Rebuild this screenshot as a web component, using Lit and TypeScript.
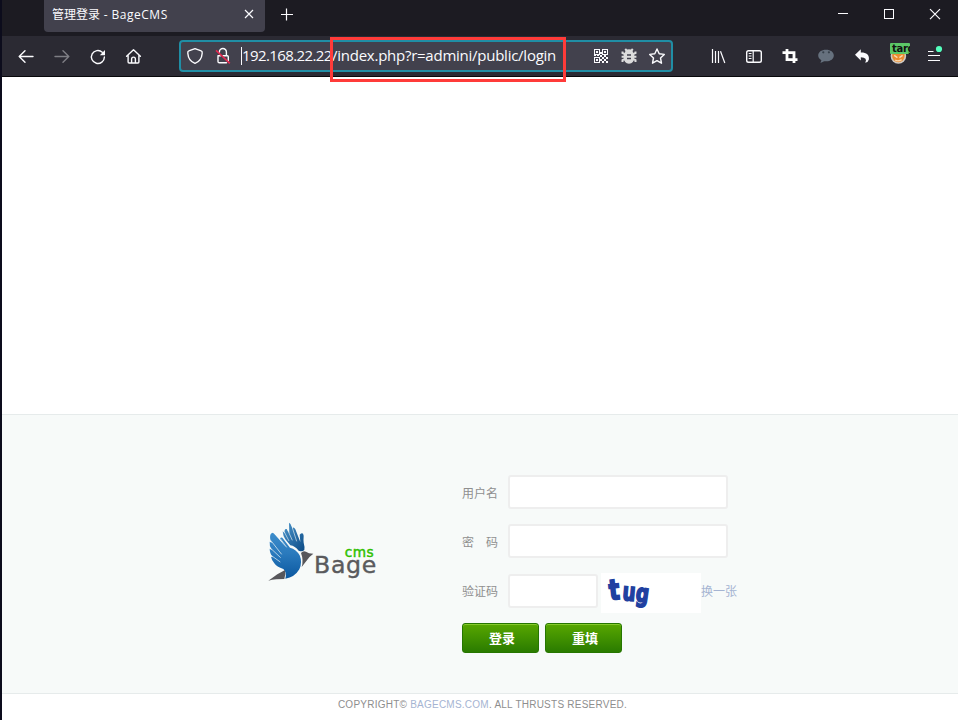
import { LitElement, html, css, svg } from "lit";
import { customElement, property } from "lit/decorators.js";

// Toolbar glyphs, each on a 24x24 grid.
const icons: Record<string, unknown> = {
  back: svg`<path class="s" d="M5.2 12.5H19M11 6.8L5.2 12.5L11 18.2"/>`,
  forward: svg`<path class="s" d="M5 12.5H18.8M13 6.8L18.8 12.5L13 18.2"/>`,
  reload: svg`<path class="s" d="M16.3 8.2A6.5 6.5 0 1 0 18.4 13"/><path class="f" d="M19 6V11.2H13.8Z"/>`,
  home: svg`<path class="s" d="M4.6 12.2L11.5 5.8L18.4 12.2M6.1 11.3V18a1 1 0 0 0 1 1H15.9a1 1 0 0 0 1-1V11.3M9.6 19V15a1.9 1.9 0 0 1 3.8 0V19"/>`,
  shield: svg`<path class="s" d="M12 4.6L18.2 6.9Q19.4 7.3 19.2 9.2C18.8 14.6 16.2 17.8 12 19.4C7.8 17.8 5.2 14.6 4.8 9.2Q4.6 7.3 5.8 6.9Z"/>`,
  lock: svg`<path class="s" d="M8.4 8.2V8a3.5 3.5 0 0 1 7 0V11.5M9.5 11.8H7V17.5a1.3 1.3 0 0 0 1.3 1.3H15.5M12 11.8H16.3a1 1 0 0 1 1 1V16.5"/><path d="M5 6.3L18.8 19.4" stroke="#e22850" stroke-width="1.6"/>`,
  qr: svg`<g class="f" shape-rendering="crispEdges"><path fill-rule="evenodd" d="M5 5h6v6H5zM6 6v4h4V6zM13 5h6v6h-6zM14 6v4h4V6zM5 13h6v6H5zM6 14v4h4v-4z"/><path d="M7 7h2v2H7zM15 7h2v2h-2zM7 15h2v2H7zM11 8h2v2h-2zM11 11h2v2h-2zM5 11h2v1H5zM8 11h2v1H8zM13 13h2v2h-2zM17 13h2v2h-2zM15 11h2v2h-2zM15 15h2v2h-2zM13 17h2v2h-2zM17 17h2v2h-2zM11 15h2v2h-2z"/></g>`,
  bug: svg`<path d="M8.2 5L10 7M15.8 5L14 7M8 10.2L5.5 9V7.6M16 10.2L18.5 9V7.6M8 12.8H4.6M16 12.8H19.4M8 15L5.5 16.2V18M16 15L18.5 16.2V18" fill="none" stroke="#dcdcdc" stroke-width="2"/><path fill="#dcdcdc" d="M8 8.5Q8.5 5.3 12 5.3T16 8.5Q17.4 9 17.4 12.7Q17 19.7 12 19.7T6.6 12.7Q6.6 9 8 8.5Z"/><path d="M10 11h4M10 14.5h4" stroke="#42414d" stroke-width="1.4"/>`,
  star: svg`<path class="s" stroke-linejoin="round" d="M12 5L14.2 9.8L19.3 10.4L15.5 14L16.5 19.2L12 16.6L7.5 19.2L8.5 14L4.7 10.4L9.8 9.8Z"/>`,
  library: svg`<path class="s thin" d="M6.5 5V19M9.5 7V19M12.5 7V19M14.5 7.2L18.8 19"/>`,
  sidebar: svg`<rect class="s" x="4.7" y="6.7" width="14.6" height="11.6" rx="1.8"/><path class="s thin" d="M11.2 7V18M6.7 9.5H9.5M6.7 12H9.5M6.7 14.5H9.5"/>`,
  crop: svg`<path d="M4.5 8.6H16V19M9 5V15.6H19.5" fill="none" stroke="#fff" stroke-width="2.8"/>`,
  chat: svg`<path fill="#66717e" d="M12 5.8C7.4 5.8 4.2 8.2 4.2 11.5C4.2 13.6 5.6 15.2 7.4 16.2L6.4 19L10.2 17.2C16 17.9 19.8 15.3 19.8 11.5C19.8 8.2 16.6 5.8 12 5.8Z"/><circle cx="9.3" cy="8.3" r="1.1" fill="#37414b"/><circle cx="14.9" cy="8.3" r="1.1" fill="#37414b"/>`,
  undo: svg`<path class="f" d="M10.8 5.2V8.6C16.5 8.5 19.5 11 18.9 15.4Q18.3 18 15.2 18.8Q18 13.4 10.8 13.3V16.6L5 10.8Z"/>`,
  target: svg`<circle cx="12.4" cy="12" r="7.8" fill="#cfc9c2"/><circle cx="12.4" cy="12" r="6.2" fill="#ec8b2f"/><path d="M8.2 11.4L11.4 13.6M16.6 11.4L13.4 13.6M9.2 16Q12.2 17.8 15.7 15.6" stroke="#fbd9ae" stroke-width="1.3" fill="none"/><rect x="4" y="-1" width="20" height="11" rx="1" fill="#5cc767"/><svg x="4" y="-1" width="20" height="11"><text x="2" y="9" font-family="DejaVu Sans" font-size="10" font-weight="700" letter-spacing="-.3" fill="#111">targ</text></svg>`,
  menu: svg`<path d="M6 7.5H11.5M6 11.5H18M6 16.5H18" stroke="#fbfbfe" stroke-width="1.2"/><circle cx="17" cy="5" r="3.1" fill="#54ffbd"/>`,
};

@customElement("ui-icon")
class UiIcon extends LitElement {
  @property() name = "";
  static styles = css`
    :host { display: flex; align-items: center; justify-content: center; width: 36px; flex: none; }
    svg { overflow: visible; display: block; }
    svg svg { overflow: hidden; }
    .s { fill: none; stroke: #fbfbfe; stroke-width: 1.4; stroke-linecap: round; stroke-linejoin: round; }
    .thin { stroke-width: 1.2; stroke-linecap: butt; }
    .f { fill: #fbfbfe; }
  `;
  render() {
    return html`<svg width="24" height="24" viewBox="0 0 24 24">${icons[this.name]}</svg>`;
  }
}

@customElement("bage-logo")
class BageLogo extends LitElement {
  static styles = css`
    :host, svg { display: block; }
    text { font-family: "DejaVu Sans", sans-serif; }
  `;
  render() {
    return html`<svg width="135" height="85" viewBox="0 0 405 255">
      <defs>
        <linearGradient id="w" x1="0" y1="0" x2="0" y2="1">
          <stop offset="0" stop-color="#3d8dcb" /><stop offset=".45" stop-color="#2a7abd" /><stop offset="1" stop-color="#0b58a0" />
        </linearGradient>
        <linearGradient id="v" x1="0" y1="0" x2="1" y2="1">
          <stop offset="0" stop-color="#4a95cc" /><stop offset="1" stop-color="#0c4b86" />
        </linearGradient>
      </defs>
      <path fill="url(#v)" d="M102 38Q107 40 110 50L113 56Q115 48 121 58L136 96L134 74Q144 64 146 77Q145 90 146 98Q150 112 148 120Q142 126 131 122Q120 108 106 106L91 88Q84 78 83 64L89 70Q87 55 95 57L103 70Z" />
      <path fill="none" stroke="#f7faf9" stroke-width="1.8" d="M88 66L102 93M97 58L112 91M112 53L125 94" />
      <path fill="url(#w)" d="M51 68Q56 68 60 74L92 110L75 86Q79 79 85 87L105 113Q124 118 134 136Q143 158 133 178Q119 202 91 206Q96 187 85 177Q65 171 58 160Q50 151 48 140L54 142Q44 131 44 116L51 121Q42 108 44 95L51 99Q43 88 46 74Z" />
      <path fill="none" stroke="#f7faf9" stroke-width="2" d="M47 91L80 133M46 114L77 143M48 136L76 156M76 86L95 112" />
      <path fill="#57575b" d="M138 129Q144 121 153 125Q160 131 175 131Q164 139 157 149L140 171Q146 150 138 129Z" />
      <path fill="#57575b" d="M40 212L67 193Q76 188 90 180Q93 193 88 207Q76 207 64 208Q50 209 40 212Z" />
      <text x="177" y="190" font-size="71" textLength="187" fill="#5a5a5d" stroke="#5a5a5d" stroke-width="1.2">Bage</text>
      <text x="269" y="140" font-size="41" textLength="87" fill="#2fc000" stroke="#2fc000" stroke-width="1.4">cms</text>
    </svg>`;
  }
}

@customElement("app-root")
class AppRoot extends LitElement {
  static styles = css`
    * { box-sizing: border-box; }
    :host {
      display: flex; flex-direction: column; width: 958px; height: 720px; overflow: hidden; box-sizing: border-box;
      background: #fff; border-left: 2px solid #0c0c1c;
      font: 12px "Liberation Sans", "Noto Sans CJK SC", sans-serif;
    }
    .titlebar { height: 36px; flex: none; display: flex; background: #1c1b22; }
    .tab {
      width: 221px; height: 32px; margin-left: 42px; padding: 0 8px 4px; display: flex; align-items: center;
      justify-content: space-between; background: #42414d; border-radius: 0 0 4px 4px; color: #fbfbfe;
      font: 12px "Open Sans", "Noto Sans CJK SC", sans-serif;
    }
    .tab span { white-space: nowrap; letter-spacing: 0.5px; }
    .tab .cn { letter-spacing: 0; }
    .tab svg { margin: 0 3px 0 0; }
    .line { fill: none; stroke: #fbfbfe; stroke-width: 1.2; }
    .plus { margin: 8px 0 0 15px; }
    .controls { margin-left: auto; display: flex; height: 29px; }
    .controls svg { width: 46px; height: 29px; }
    .toolbar { height: 41px; flex: none; display: flex; padding-left: 6px; background: #2b2a33; border-bottom: 1px solid #08080b; }
    .toolbar > ui-icon { height: 40px; }
    .dim { opacity: 0.4; }
    .url {
      width: 494px; height: 32px; margin: 4px 27px 0; display: flex; background: #42414d;
      border: 2px solid #208ea5; border-radius: 4px; color: #fbfbfe; font: 15px/27px "Open Sans", sans-serif;
    }
    .url ui-icon { width: 28px; }
    .address { display: flex; width: 350px; padding-left: 4px; white-space: nowrap; position: relative; }
    .caret { width: 1px; height: 18px; margin: 5px 0 0 0; background: #fbfbfe; }
    .host { width: 90px; letter-spacing: -0.6px; }
    .path { letter-spacing: -0.25px; }
    .mark { position: absolute; left: 93px; top: -5px; width: 236px; height: 45px; border: 3px solid #ff3b39; }
    .blank { height: 337px; flex: none; }
    .panel {
      height: 280px; flex: none; display: flex; background: #f7faf9;
      border-top: 1px solid #e6ebeb; border-bottom: 1px solid #e6ebeb;
    }
    bage-logo { margin: 95px 0 0 253px; }
    form { margin: 60px 0 0 72px; width: 300px; }
    .row { display: flex; align-items: center; height: 34px; margin-bottom: 15px; color: #8f8f8f; }
    .row label { width: 46px; white-space: pre; }
    input { width: 220px; height: 34px; border: 2px solid #eee; border-radius: 3px; background: #fff; outline: 0; padding: 4px; }
    .code { height: 42px; margin-top: -3px; }
    .code input { width: 90px; }
    .code label, .code a { padding-bottom: 1px; }
    .captcha { width: 100px; height: 40px; margin: 4px 0 0 3px; background: #fff; flex: none; }
    .captcha text { font: 700 28px "DejaVu Sans Condensed", "DejaVu Sans", sans-serif; fill: #2040a0; stroke: #2040a0; stroke-width: 1.8; }
    a { color: #a5b4d2; white-space: nowrap; }
    .buttons { display: flex; gap: 6px; margin-top: -4px; }
    button {
      width: 77px; height: 30px; padding: 0 4px 1px 7px; border: 1px solid #267600; border-radius: 3px;
      background: linear-gradient(#58a700, #2a7b00); box-shadow: inset 0 1px #85c92a; color: #fff;
      font: 700 13px "Noto Sans CJK SC", sans-serif;
    }
    footer { text-align: center; color: #8e8e8e; font-size: 10px; line-height: 12px; padding: 5px 0 0 5px; letter-spacing: 0.24px; }
  `;

  render() {
    return html`
      <div class="titlebar">
        <div class="tab">
          <span><span class="cn">管理登录</span> - BageCMS</span>
          <svg width="10" height="10"><path class="line" d="M1 1L9 9M9 1L1 9" /></svg>
        </div>
        <svg class="plus" width="14" height="14"><path class="line" d="M1 6.5H13M6.5 .5V12.5" /></svg>
        <div class="controls">
          <svg><path class="line" shape-rendering="crispEdges" d="M18 13.5H28" /></svg>
          <svg><rect class="line" shape-rendering="crispEdges" x="18.5" y="9.5" width="9" height="9" /></svg>
          <svg><path class="line" d="M18 9.2L28 19.2M28 9.2L18 19.2" /></svg>
        </div>
      </div>
      <div class="toolbar">
        <ui-icon name="back"></ui-icon><ui-icon class="dim" name="forward"></ui-icon>
        <ui-icon name="reload"></ui-icon><ui-icon name="home"></ui-icon>
        <div class="url">
          <ui-icon name="shield"></ui-icon><ui-icon name="lock"></ui-icon>
          <div class="address">
            <i class="caret"></i><span class="host">192.168.22.22</span><span class="path">/index.php?r=admini/public/login</span>
            <div class="mark"></div>
          </div>
          <ui-icon name="qr"></ui-icon><ui-icon name="bug"></ui-icon><ui-icon name="star"></ui-icon>
        </div>
        ${["library", "sidebar", "crop", "chat", "undo", "target", "menu"].map((n) => html`<ui-icon name=${n}></ui-icon>`)}
      </div>
      <div class="blank"></div>
      <div class="panel">
        <bage-logo></bage-logo>
        <form>
          <div class="row"><label>用户名</label><input /></div>
          <div class="row"><label>密　码</label><input /></div>
          <div class="row code">
            <label>验证码</label><input />
            <svg class="captcha">
              <text transform="translate(9 27) rotate(-6) scale(.86 1)">t</text>
              <text transform="translate(21 27) rotate(5) scale(.72 .9)">u</text>
              <text transform="translate(34 28) rotate(8) scale(.72 .9)">g</text>
            </svg>
            <a>换一张</a>
          </div>
          <div class="buttons"><button type="button">登录</button><button type="button">重填</button></div>
        </form>
      </div>
      <footer>COPYRIGHT© <a>BAGECMS.COM</a>. ALL THRUSTS RESERVED.</footer>
    `;
  }
}
